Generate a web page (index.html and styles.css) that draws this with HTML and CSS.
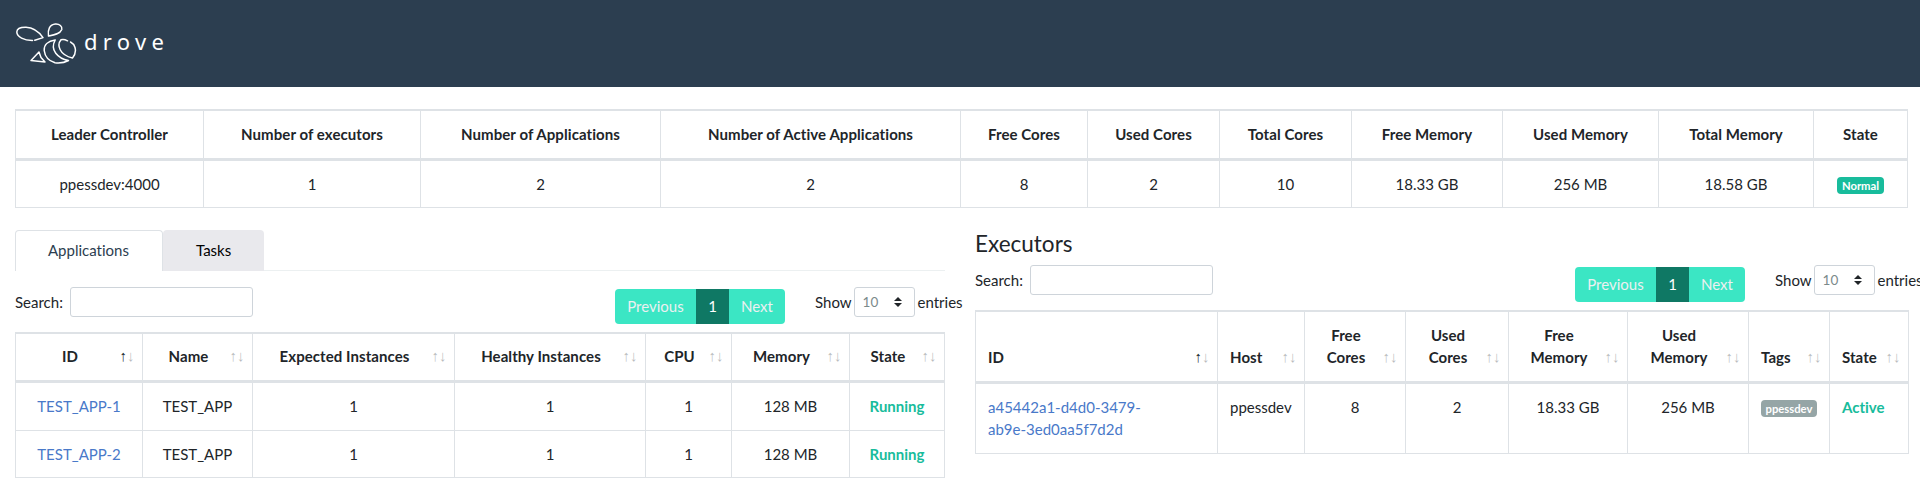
FILE: index.html
```html
<!DOCTYPE html>
<html lang="en">
<head>
<meta charset="utf-8">
<title>Drove</title>
<link rel="stylesheet" href="styles.css">
</head>
<body>
<header class="navbar">
  <svg class="logo" viewBox="0 0 62 44" width="62" height="44">
    <path d="M17.500 19.400C9 19.500 2 16 1.800 11C2 7 6 6.200 11 6.300C18 6.500 24 11 28 16.600L19.800 19.300"/>
    <path d="M33.500 15C32.500 9 34.500 3.500 40.500 3C44.500 2.800 47.500 5.500 46.800 8.500C45 13 39 14 33.500 15Z"/>
    <path d="M40.200 19C33 20 28.800 24 29.200 29.500C30 36 34 40 40 41.800C45 42.300 50 41.500 53.500 39.500C43 37.500 34.500 29 40.200 19Z"/>
    <path d="M52.500 19.800C50 18.500 48 18.200 46 18.800C41.500 24 44.500 34 57.500 37C60 34 61 30 60 26.500C59.300 24 57.500 22 55.500 21"/>
    <path d="M24 31L16 39.500L30 41L26 36.500Z"/>
  </svg>
  <span class="brand">drove</span>
</header>
<main class="content">
  <table class="table summary">
    <colgroup><col class="s1"><col class="s2"><col class="s3"><col class="s4"><col class="s5"><col class="s6"><col class="s7"><col class="s8"><col class="s9"><col class="s10"><col class="s11"></colgroup>
    <thead><tr><th>Leader Controller</th><th>Number of executors</th><th>Number of Applications</th><th>Number of Active Applications</th><th>Free Cores</th><th>Used Cores</th><th>Total Cores</th><th>Free Memory</th><th>Used Memory</th><th>Total Memory</th><th>State</th></tr></thead>
    <tbody><tr><td>ppessdev:4000</td><td>1</td><td>2</td><td>2</td><td>8</td><td>2</td><td>10</td><td>18.33 GB</td><td>256 MB</td><td>18.58 GB</td><td><span class="badge badge-success">Normal</span></td></tr></tbody>
  </table>
  <div class="columns">
    <section class="column">
      <nav class="tabs"><a class="tab active">Applications</a><a class="tab">Tasks</a></nav>
      <div class="toolbar">
        <label class="search">Search:<input type="search" class="search-input"></label>
        <div class="pagination"><a class="page prev">Previous</a><a class="page current">1</a><a class="page next">Next</a></div>
        <div class="length">Show <span class="select">10<svg class="caret" viewBox="0 0 8 10" width="8" height="10"><path d="M4 0L8 4H0ZM4 10L0 6H8Z"/></svg></span> entries</div>
      </div>
      <table class="table sortable apps">
        <colgroup><col class="a1"><col class="a2"><col class="a3"><col class="a4"><col class="a5"><col class="a6"><col class="a7"></colgroup>
        <thead><tr><th class="asc">ID</th><th>Name</th><th>Expected Instances</th><th>Healthy Instances</th><th>CPU</th><th>Memory</th><th>State</th></tr></thead>
        <tbody>
          <tr><td><a class="link">TEST_APP-1</a></td><td>TEST_APP</td><td>1</td><td>1</td><td>1</td><td>128 MB</td><td class="ok">Running</td></tr>
          <tr><td><a class="link">TEST_APP-2</a></td><td>TEST_APP</td><td>1</td><td>1</td><td>1</td><td>128 MB</td><td class="ok">Running</td></tr>
        </tbody>
      </table>
    </section>
    <section class="column">
      <h4 class="title">Executors</h4>
      <div class="toolbar">
        <label class="search">Search:<input type="search" class="search-input"></label>
        <div class="pagination"><a class="page prev">Previous</a><a class="page current">1</a><a class="page next">Next</a></div>
        <div class="length">Show <span class="select">10<svg class="caret" viewBox="0 0 8 10" width="8" height="10"><path d="M4 0L8 4H0ZM4 10L0 6H8Z"/></svg></span> entries</div>
      </div>
      <table class="table sortable executors">
        <colgroup><col class="e1"><col class="e2"><col class="e3"><col class="e4"><col class="e5"><col class="e6"><col class="e7"><col class="e8"></colgroup>
        <thead><tr><th class="left asc">ID</th><th class="left">Host</th><th>Free<br>Cores</th><th>Used<br>Cores</th><th>Free<br>Memory</th><th>Used<br>Memory</th><th class="left">Tags</th><th class="left">State</th></tr></thead>
        <tbody>
          <tr><td class="left"><a class="link">a45442a1-d4d0-3479-<br>ab9e-3ed0aa5f7d2d</a></td><td class="left">ppessdev</td><td>8</td><td>2</td><td>18.33 GB</td><td>256 MB</td><td class="left"><span class="badge badge-tag">ppessdev</span></td><td class="left ok">Active</td></tr>
        </tbody>
      </table>
    </section>
  </div>
</main>
</body>
</html>
```
FILE: styles.css
```css
* { box-sizing: border-box; }
body { margin: 0; font: 15px/22px Lato, sans-serif; color: #212529; background: #fff; overflow: hidden; font-variant-ligatures: none; }
.navbar { height: 87px; padding: 20.5px 0 0 15px; display: flex; align-items: flex-start; background: #2c3e50; }
.logo { fill: none; stroke: #fff; stroke-width: 1.5; stroke-linejoin: round; stroke-linecap: round; }
.brand { margin: 5.5px 0 0 7px; color: #fff; font: 22px/30px "Noto Sans", sans-serif; letter-spacing: 5.3px; }
.content { padding: 22px 0 0 15px; }

.table { table-layout: fixed; border-collapse: separate; border-spacing: 0; border-left: 1px solid #dee2e6; }
.table th, .table td { padding: 12px 12px 11px; text-align: center; border-right: 1px solid #dee2e6; vertical-align: top; white-space: nowrap; }
.table th { height: 52px; padding: 11px 12px 13px; font-weight: 700; letter-spacing: .07px; vertical-align: bottom; border-top: 2px solid #dee2e6; border-bottom: 3px solid #dee2e6; }
.table td { height: 47px; border-bottom: 1px solid #dee2e6; }
.table .left { text-align: left; }
.table.sortable th { position: relative; padding-right: 30px; }
.sortable th::before, .sortable th::after { position: absolute; bottom: 13px; opacity: .3; font-family: "Liberation Sans", sans-serif; font-weight: 400; letter-spacing: 0; }
.sortable th::before { content: "↑"; right: 15px; }
.sortable th::after { content: "↓"; right: 7.5px; }
.sortable th.asc::before { opacity: 1; }
.link { color: #4979c9; }
.table .ok { color: #18bc9c; font-weight: 700; }

.badge { display: inline-block; padding: 3px 4.5px; border-radius: 4px; color: #fff; font-size: 11.25px; line-height: 11.25px; font-weight: 700; vertical-align: baseline; }
.badge-success { background: #18bc9c; }
.badge-tag { background: #95a5a6; }

.summary { width: 1893px; }
.s1 { width: 188px; } .s2 { width: 217px; } .s3 { width: 240px; } .s4 { width: 300px; }
.s5 { width: 127px; } .s6 { width: 132px; } .s7 { width: 132px; } .s8 { width: 151px; }
.s9 { width: 156px; } .s10 { width: 155px; } .s11 { width: 94px; }

.columns { display: grid; grid-template-columns: 930px 945px; column-gap: 30px; padding-top: 22px; }
.tabs { display: flex; height: 41px; border-bottom: 1px solid #ecf0f1; }
.tab { width: 101px; height: 41px; padding: 8.5px 0 0 33px; border-radius: 4px 4px 0 0; background: #e9e9ed; color: #000; }
.tab.active { width: 148px; padding: 7.5px 0 0 32px; background: #fff; color: #2c3e50; border: 1px solid #dee2e6; border-bottom: 0; }
.title { margin: 0; height: 19px; line-height: 27px; font-size: 22.5px; font-weight: 400; }

.toolbar { display: flex; height: 61px; padding-top: 16px; white-space: nowrap; }
.search { display: flex; flex: none; width: 600px; height: 30px; align-items: center; }
.search-input { width: 183px; height: 30px; margin: 0 0 0 7px; padding: 0 8px; border: 1px solid #ced4da; border-radius: 3px; background: #fff; }
.pagination { display: flex; flex: none; width: 170px; height: 35px; margin-top: 2px; border-radius: 4px; overflow: hidden; }
.page { background: #3be6c4; color: #ecf0f1; text-align: center; line-height: 35px; }
.prev { width: 81px; } .current { width: 33px; background: #0f7864; color: #fff; } .next { width: 56px; }
.length { display: flex; flex: none; align-items: center; height: 30px; margin-left: 30px; }
.select { display: flex; align-items: center; justify-content: space-between; width: 61px; height: 30px; margin: 0 3px 0 2px; padding: 0 12px 0 8px; border: 1px solid #ced4da; border-radius: 3px; color: #7b8a8b; font-size: 13.5px; }
.caret { fill: #212529; }

.apps { width: 930px; }
.table.apps th { height: 51px; }
.apps tbody tr:first-child td { height: 48px; }
.a1 { width: 127px; } .a2 { width: 110px; } .a3 { width: 202px; } .a4 { width: 191px; }
.a5 { width: 86px; } .a6 { width: 118px; } .a7 { width: 95px; }
.executors { width: 934px; }
.table.executors th, .table.executors td { line-height: 22px; }
.table.executors th { height: 74px; padding-top: 10px; }
.table.executors td { height: 70px; }
.e1 { width: 242px; } .e2 { width: 87px; } .e3 { width: 101px; } .e4 { width: 103px; }
.e5 { width: 119px; } .e6 { width: 121px; } .e7 { width: 81px; } .e8 { width: 79px; }
```
